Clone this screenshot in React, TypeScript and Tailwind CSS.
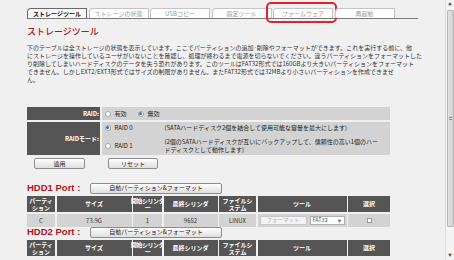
import React from 'react';

const tabs = ['ストレージツール', 'ストレージの状態', 'USBコピー', '設定ツール', 'ファームウェア', '再起動'];

const intro = [
  '下のテーブルは全ストレージの状態を表示しています。ここでパーティションの追加·削除やフォーマットができます。これを実行する前に、他',
  'にストレージを操作しているユーザがいないことを確認し、処理が終わるまで電源を切らないでください。違うパーティションをフォーマットした',
  'り削除してしまいハードディスクのデータを失う恐れがあります。このツールはFAT32形式では160GBより大きいパーティションをフォーマット',
  'できません。しかしEXT2/EXT3形式ではサイズの制限がありません。またFAT32形式では32MBより小さいパーティションを作成できませ',
  'ん。',
];

function Radio({ checked }: { checked?: boolean }) {
  return (
    <span className="flex h-[6px] w-[6px] items-center justify-center rounded-full border border-[#a4a4a4] bg-white">
      {checked && <span className="h-[3px] w-[3px] rounded-full bg-[#2f6fd6]" />}
    </span>
  );
}

function Btn({ children, className = '' }: { children: React.ReactNode; className?: string }) {
  return (
    <div
      className={`flex h-[11px] items-center justify-center rounded-[2px] border border-[#8c8c8c] bg-linear-to-b from-white to-[#dedede] text-[6px] leading-none text-[#222] ${className}`}
    >
      {children}
    </div>
  );
}

function HddBlock({ label, showData }: { label: string; showData?: boolean }) {
  const head = 'flex items-center justify-center whitespace-nowrap bg-[#555555] text-center text-[6px] font-bold leading-[7.5px] text-white';
  const cell = 'flex items-center justify-center bg-[#d3d3d3] text-[6px] text-[#333]';
  return (
    <div>
      <div className="flex h-[10px] items-center">
        <span className="w-[63px] font-['Liberation_Sans',sans-serif] text-[9.5px] font-bold leading-[10px] text-[#b3121b]">
          {label}
        </span>
        <Btn className="w-[132px]">自動パーティション&amp;フォーマット</Btn>
      </div>
      <div className="mt-[3px] grid w-[363px] grid-cols-[28px_75px_29px_54px_37px_89px_42px] gap-x-[1.5px] gap-y-[2px]">
        <div className={`${head} h-[16px]`}>パーティ<br />ション</div>
        <div className={head}>サイズ</div>
        <div className={`${head} text-[4.6px] tracking-[-0.4px]`}>開始シリンダ<br />ー</div>
        <div className={head}>最終シリンダ</div>
        <div className={head}>ファイルシ<br />ステム</div>
        <div className={head}>ツール</div>
        <div className={head}>選択</div>
        {showData && (
          <>
            <div className={`${cell} h-[13px]`}>C</div>
            <div className={cell}>73.9G</div>
            <div className={cell}>1</div>
            <div className={cell}>9652</div>
            <div className={cell}>LINUX</div>
            <div className={`${cell} gap-[3px]`}>
              <span className="flex h-[9px] w-[47px] items-center justify-center rounded-[1px] border border-[#c8c8c8] bg-[#f4f4f4] text-[5.5px] text-[#b0b0b0]">
                フォーマット
              </span>
              <span className="flex h-[9px] w-[35px] items-center justify-between border border-[#b0b0b0] bg-white px-[2px] text-[5.5px] text-[#555]">
                FAT32<span className="text-[4px] text-[#777]">▼</span>
              </span>
            </div>
            <div className={cell}>
              <span className="h-[5px] w-[5px] border border-[#9a9a9a] bg-white" />
            </div>
          </>
        )}
      </div>
    </div>
  );
}

export default function App() {
  return (
    <div className="flex h-[260px] w-[454px] overflow-hidden bg-[#f0f0f0] font-['Noto_Sans_CJK_JP',sans-serif] text-[#222]">
      <div className="flex-1 pl-[27px]">
        {/* tab strip */}
        <div className="mt-[8px] flex w-[391px] gap-[1.5px] border-b border-[#7a7a7a]">
          {tabs.map((t, i) => (
            <div key={t} className="relative">
              <div
                className={
                  i === 0
                    ? 'flex h-[10px] w-[60px] items-center justify-center rounded-tl-[4px] border border-b-0 border-[#6a6a6a] bg-[#f7f7f7] text-[6px] font-bold leading-none text-[#111]'
                    : 'flex h-[10px] w-[60px] items-center justify-center rounded-tl-[4px] border border-b-0 border-[#c4c4c4] bg-white text-[6px] leading-none text-[#9a9a9a]'
                }
              >
                {t}
              </div>
              {i === 4 && (
                <div className="absolute -top-[6px] -bottom-[5px] -left-[7px] -right-[4px] rounded-[5px] border-2 border-[#e8202a]" />
              )}
            </div>
          ))}
        </div>

        <h1 className="mt-[8px] text-[9px] leading-[10px] font-medium text-[#b0161e]">ストレージツール</h1>

        <div className="mt-[7px] text-[6px] leading-[8px] text-[#333]">
          {intro.map((l) => (
            <div key={l} className="whitespace-nowrap">{l}</div>
          ))}
        </div>

        {/* RAID settings */}
        <div className="mt-[23px] grid w-[363px] grid-cols-[73px_1fr] gap-x-[1.5px] gap-y-[2px] text-[6px]">
          <div className="flex h-[13px] items-center justify-end bg-[#555555] pr-[1px] font-bold text-white">RAID:</div>
          <div className="flex items-center gap-[4px] bg-[#d3d3d3] pl-[3px]">
            <Radio />
            <span>有効</span>
            <span className="ml-[7px]"><Radio checked /></span>
            <span>無効</span>
          </div>
          <div className="flex h-[33px] items-center justify-end bg-[#555555] pr-[1px] font-bold text-white">RAIDモード:</div>
          <div className="flex flex-col justify-center gap-[6px] bg-[#d3d3d3] pl-[3px] leading-[8px]">
            <div className="flex items-center">
              <Radio checked />
              <span className="ml-[4px] w-[50px]">RAID 0</span>
              <span>(SATAハードディスク2個を結合して使用可能な容量を最大にします)</span>
            </div>
            <div className="flex items-center">
              <Radio />
              <span className="ml-[4px] w-[50px]">RAID 1</span>
              <span>(2個のSATAハードディスクが互いにバックアップして、信頼性の高い1個のハー<br />ドディスクとして動作します)</span>
            </div>
          </div>
        </div>

        <div className="mt-[3px] flex">
          <Btn className="ml-[7px] w-[51px]">適用</Btn>
          <Btn className="ml-[23px] w-[50px]">リセット</Btn>
        </div>

        <div className="mt-[14px]">
          <HddBlock label="HDD1 Port :" showData />
        </div>
        <div>
          <HddBlock label="HDD2 Port :" />
        </div>
      </div>

      {/* scrollbar */}
      <div className="flex w-[9px] flex-col items-center border-l border-[#dcdcdc] bg-[#f4f4f4]">
        <span className="mt-[2px] text-[4px] leading-[5px] text-[#555]">▲</span>
        <div className="mt-[3px] flex h-[217px] w-[7px] items-center justify-center rounded-[1px] border border-[#b8b8b8] bg-linear-to-r from-[#e4e4e4] to-[#cfcfcf]">
          <span className="h-[3px] w-[3px] border-y border-[#888]" />
        </div>
        <span className="mt-auto mb-[2px] text-[4px] leading-[5px] text-[#555]">▼</span>
      </div>
    </div>
  );
}
